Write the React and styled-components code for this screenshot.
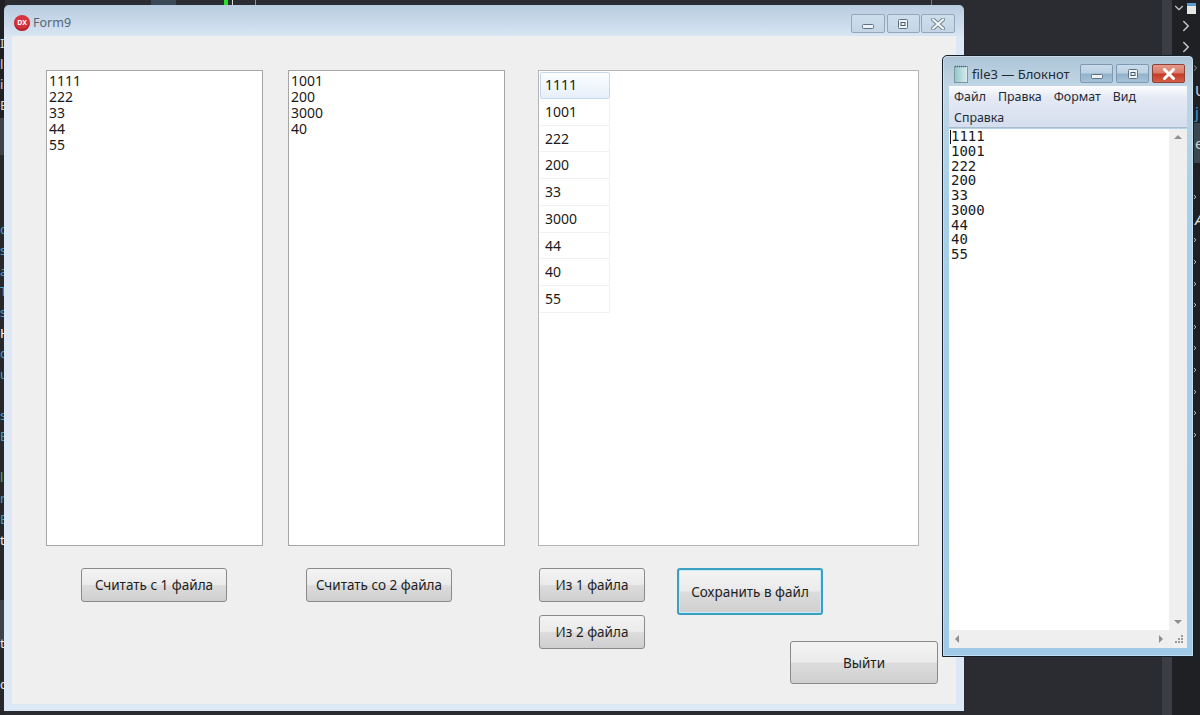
import styled, { createGlobalStyle } from "styled-components"
import { ChevronDown, ChevronRight } from "lucide-react"

const leftFragments = [
    ["I", "#d8d8d8"], ["l", "#d8d8d8"], ["i", "#d8d8d8"], ["E", "#d8d8d8"], ["", ""], ["", ""], ["", ""], ["", ""], ["", ""],
    ["c", "#3f9fc9"], ["s", "#3f9fc9"], ["a", "#3f9fc9"], ["T", "#3f9fc9"], ["s", "#3f9fc9"], ["H", "#ffffff"], ["c", "#3f9fc9"],
    ["u", "#3f9fc9"], ["", ""], ["s", "#3f9fc9"], ["E", "#3f9fc9"], ["", ""], ["l", "#4fb070"], ["n", "#3f9fc9"], ["E", "#3f9fc9"],
    ["t", "#e8e8e8"], ["", ""], ["", ""], ["", ""], ["", ""], ["t", "#e8e8e8"], ["", ""], ["c", "#e8e8e8"],
]

const rightRows = [242, 263, 285, 307, 328, 350, 372, 393, 415, 436]

const list1 = ["1111", "222", "33", "44", "55"]
const list2 = ["1001", "200", "3000", "40"]
const merged = ["1111", "1001", "222", "200", "33", "3000", "44", "40", "55"]

function WindowGlyph({ kind }) {
    if (kind === "min") {
        return (
            <svg width="14" height="12" viewBox="0 0 14 12">
                <rect x="1.5" y="6.5" width="11" height="4" rx="1" fill="#eef3f7" stroke="#5f7182" />
            </svg>
        )
    }
    if (kind === "max") {
        return (
            <svg width="14" height="12" viewBox="0 0 14 12">
                <rect x="2.5" y="1.5" width="9" height="9" rx="1" fill="#eef3f7" stroke="#5f7182" />
                <rect x="5" y="4.5" width="4" height="3" fill="none" stroke="#4a5a68" />
            </svg>
        )
    }
    return (
        <svg width="14" height="12" viewBox="0 0 14 12">
            <path d="M2 1.5 L12 10.5 M12 1.5 L2 10.5" stroke="#6f8090" strokeWidth="4" strokeLinecap="round" />
            <path d="M2 1.5 L12 10.5 M12 1.5 L2 10.5" stroke="#f4f7fa" strokeWidth="2.2" strokeLinecap="round" />
        </svg>
    )
}

function NotepadIcon() {
    return (
        <svg width="14" height="18" viewBox="0 0 14 18">
            <defs>
                <linearGradient id="padFill" x1="0" y1="0" x2="1" y2="0">
                    <stop offset="0" stopColor="#8fc8cc" />
                    <stop offset="1" stopColor="#dcecee" />
                </linearGradient>
            </defs>
            <rect x="0.5" y="1.5" width="13" height="16" fill="url(#padFill)" stroke="#7f98a0" />
            <path d="M1 1.5 H13" stroke="#56666e" strokeWidth="1.4" strokeDasharray="1 1" />
        </svg>
    )
}

function App() {
    return (
        <Desktop>
            <GlobalStyle />
            <LeftRail>
                {leftFragments.map(([letter, color], i) => (
                    <RailText key={i} $color={color}>{letter}</RailText>
                ))}
            </LeftRail>
            <Editor>
                <TopMarks>
                    <Mark $w={25} $ml={146} $color="#3b4855" />
                    <Mark $w={4} $ml={48} $color="#28e028" />
                    <Mark $w={1} $ml={4} $color="#d8d8d8" />
                    <Mark $w={1} $ml={22} $color="#c070c0" />
                    <Mark $w={1} $ml={675} $color="#77797d" />
                </TopMarks>
            </Editor>
            <Stripe />
            <RightPanel>
                <TreeHead>
                    <ChevronDown size={14} color="#c8c8c8" />
                    <FileMark />
                </TreeHead>
                <TreeArrow $ml={5} $h={21}><ChevronRight size={18} color="#c8c8c8" /></TreeArrow>
                <TreeArrow $ml={5} $h={21}><ChevronRight size={18} color="#c8c8c8" /></TreeArrow>
                <TreeArrow $ml={19} $h={22}><ChevronRight size={12} color="#c8c8c8" /></TreeArrow>
                <PanelLetter $color="#d0d0d0">U</PanelLetter>
                <PanelLetter $color="#3f9fc9">j</PanelLetter>
                <PanelBlock>e</PanelBlock>
                <Spacer />
                <TreeArrow $ml={17} $h={21.6}><ChevronRight size={16} color="#d8d8d8" /></TreeArrow>
                <PanelLetter $color="#e0e0e0" $italic>A</PanelLetter>
                {rightRows.map((y) => (
                    <TreeArrow key={y} $ml={17} $h={21.6}><ChevronRight size={16} color="#d8d8d8" /></TreeArrow>
                ))}
            </RightPanel>

            <FormWindow>
                <FormTitleBar>
                    <AppBadge>DX</AppBadge>
                    <FormTitle>Form9</FormTitle>
                    <WindowButtons>
                        <CaptionButton $w={34}><WindowGlyph kind="min" /></CaptionButton>
                        <CaptionButton $w={33}><WindowGlyph kind="max" /></CaptionButton>
                        <CaptionButton $w={34}><WindowGlyph kind="close" /></CaptionButton>
                    </WindowButtons>
                </FormTitleBar>
                <Client>
                    <Column $w={217}>
                        <ListBox>
                            {list1.map((n) => <div key={n}>{n}</div>)}
                        </ListBox>
                        <ReadButton $ml={35}>Считать с 1 файла</ReadButton>
                    </Column>
                    <Column $w={217}>
                        <ListBox>
                            {list2.map((n) => <div key={n}>{n}</div>)}
                        </ListBox>
                        <ReadButton $ml={18}>Считать со 2 файла</ReadButton>
                    </Column>
                    <Column $w={400}>
                        <GridBox>
                            {merged.map((n, i) => (
                                <GridCell key={i} $active={i === 0}>{n}</GridCell>
                            ))}
                        </GridBox>
                        <Actions>
                            <SourceStack>
                                <SourceButton>Из 1 файла</SourceButton>
                                <SourceButton>Из 2 файла</SourceButton>
                            </SourceStack>
                            <SaveColumn>
                                <SaveButton>Сохранить в файл</SaveButton>
                                <ExitButton>Выйти</ExitButton>
                            </SaveColumn>
                        </Actions>
                    </Column>
                </Client>
            </FormWindow>

            <NotepadWindow>
                <NotepadTitleBar>
                    <NotepadIcon />
                    <NotepadTitle>file3 — Блокнот</NotepadTitle>
                    <NotepadButtons>
                        <AeroButton $w={33}><WindowGlyph kind="min" /></AeroButton>
                        <AeroButton $w={33}><WindowGlyph kind="max" /></AeroButton>
                        <CloseButton>
                            <svg width="14" height="12" viewBox="0 0 14 12">
                                <path d="M2.5 1.5 L11.5 10.5 M11.5 1.5 L2.5 10.5" stroke="#fff" strokeWidth="3" strokeLinecap="round" />
                            </svg>
                        </CloseButton>
                    </NotepadButtons>
                </NotepadTitleBar>
                <MenuBar>
                    <MenuItem>Файл</MenuItem>
                    <MenuItem>Правка</MenuItem>
                    <MenuItem>Формат</MenuItem>
                    <MenuItem>Вид</MenuItem>
                    <MenuItem>Справка</MenuItem>
                </MenuBar>
                <EditArea>
                    <TextPane>
                        <Caret />
                        {merged.map((n, i) => <div key={i}>{n}</div>)}
                    </TextPane>
                    <VScroll>
                        <ArrowUp />
                        <ArrowDown />
                    </VScroll>
                </EditArea>
                <HScroll>
                    <HTrack>
                        <ArrowLeft />
                        <ArrowRight />
                    </HTrack>
                    <Grip>
                        <svg width="12" height="12" viewBox="0 0 12 12" fill="#9a9a9a">
                            <rect x="8" y="1" width="2" height="2" />
                            <rect x="5" y="4" width="2" height="2" />
                            <rect x="8" y="4" width="2" height="2" />
                            <rect x="2" y="7" width="2" height="2" />
                            <rect x="5" y="7" width="2" height="2" />
                            <rect x="8" y="7" width="2" height="2" />
                        </svg>
                    </Grip>
                </HScroll>
            </NotepadWindow>
        </Desktop>
    )
}

const GlobalStyle = createGlobalStyle`
    html, body {
        margin: 0;
        padding: 0;
        background: #2a2c31;
    }
    * {
        box-sizing: border-box;
    }
`;

const uiFont = `"Noto Sans", "Open Sans", sans-serif`;

const Desktop = styled.div`
    position: relative;
    display: flex;
    width: 1200px;
    height: 715px;
    overflow: hidden;
    background: #2a2c31;
    font-family: ${uiFont};
`;

const LeftRail = styled.div`
    width: 5px;
    padding-top: 33px;
    display: flex;
    flex-direction: column;
    overflow: hidden;
    background: linear-gradient(#1f2024 0, #1f2024 118px, #3d4248 118px, #3d4248 155px, #26282c 155px, #26282c 600px, #3d4248 600px, #3d4248 640px, #26282c 640px);
`;

const RailText = styled.div`
    height: 20.7px;
    line-height: 20px;
    font-size: 13px;
    color: ${(p) => p.$color || "transparent"};
`;

const Editor = styled.div`
    flex: 1;
    min-width: 0;
`;

const TopMarks = styled.div`
    display: flex;
    height: 5px;
`;

const Mark = styled.div`
    width: ${(p) => p.$w}px;
    margin-left: ${(p) => p.$ml}px;
    background: ${(p) => p.$color};
    flex: none;
`;

const Stripe = styled.div`
    width: 10px;
    background: #3a3d44;
`;

const RightPanel = styled.div`
    width: 28px;
    display: flex;
    flex-direction: column;
    background: #1f2024;
    padding-top: 1px;
    overflow: hidden;
`;

const TreeHead = styled.div`
    display: flex;
    align-items: center;
    height: 14px;
    gap: 1px;
`;

const FileMark = styled.div`
    width: 9px;
    height: 11px;
    background: #e6e6e6;
    border-top: 3px solid #5a9ad0;
`;

const TreeArrow = styled.div`
    display: flex;
    align-items: center;
    flex: none;
    height: ${(p) => p.$h}px;
    margin-left: ${(p) => p.$ml}px;
`;

const PanelLetter = styled.div`
    height: 22px;
    flex: none;
    padding-left: 23px;
    font-size: 15px;
    font-style: ${(p) => (p.$italic ? "italic" : "normal")};
    line-height: 22px;
    color: ${(p) => p.$color};
`;

const PanelBlock = styled.div`
    height: 40px;
    flex: none;
    padding-left: 23px;
    font-size: 15px;
    line-height: 40px;
    color: #d0d0d0;
    background: #3a4650;
`;

const Spacer = styled.div`
    height: 23px;
    flex: none;
`;

const FormWindow = styled.div`
    position: absolute;
    left: 4px;
    top: 5px;
    width: 960px;
    height: 706px;
    padding: 0 8px 7px;
    display: flex;
    flex-direction: column;
    border-radius: 5px 5px 0 0;
    background: linear-gradient(#b8cce0 0, #d8e5f3 31px, #dce8f5 32px);
`;

const FormTitleBar = styled.div`
    height: 31px;
    flex: none;
    display: flex;
    align-items: center;
    padding-top: 4px;
    margin-left: 2px;
`;

const AppBadge = styled.div`
    width: 16px;
    height: 16px;
    border-radius: 50%;
    background: #d8333f;
    box-shadow: inset 0 -2px 2px rgba(120, 0, 10, 0.4);
    color: #fff;
    font-size: 7px;
    font-weight: 700;
    line-height: 16px;
    text-align: center;
`;

const FormTitle = styled.div`
    margin-left: 3px;
    font-size: 12.5px;
    color: #566674;
`;

const WindowButtons = styled.div`
    margin-left: auto;
    margin-top: 2px;
    margin-right: 1px;
    display: flex;
    gap: 1.5px;
`;

const CaptionButton = styled.div`
    width: ${(p) => p.$w}px;
    height: 19px;
    display: flex;
    align-items: center;
    justify-content: center;
    border: 1px solid #93a7ba;
    border-radius: 2px;
    background: linear-gradient(#cfdeec, #c3d5e6);
`;

const Client = styled.div`
    flex: 1;
    display: flex;
    padding: 34px 0 0 34px;
    background: #efefef;
    color: #1a1a1a;
`;

const Column = styled.div`
    width: ${(p) => p.$w}px;
    flex: none;
    margin-right: 25px;
    &:nth-child(2) {
        margin-right: 33px;
    }
`;

const ListBox = styled.div`
    width: 217px;
    height: 476px;
    padding: 2px 2px;
    background: #fff;
    border: 1px solid #a5a5a5;
    font-size: 14px;
    line-height: 16px;
`;

const GridBox = styled.div`
    width: 381px;
    height: 476px;
    padding: 1px;
    background: #fff;
    border: 1px solid #b5b5b5;
    font-size: 14px;
`;

const GridCell = styled.div`
    width: 70px;
    height: 26.75px;
    padding-left: 5px;
    line-height: 26px;
    border-bottom: 1px solid #f0f0f0;
    border-right: 1px solid #f0f0f0;
    ${(p) => p.$active && `
        border: 1px solid #c5d9ea;
        border-radius: 2px;
        padding-left: 4px;
        line-height: 24px;
        background: linear-gradient(#fbfdff, #e6f0fa);
    `}
`;

const PushButton = styled.div`
    display: flex;
    align-items: center;
    justify-content: center;
    flex: none;
    border: 1px solid #8a8a8a;
    border-radius: 3px;
    background: linear-gradient(#f3f3f3 0, #ebebeb 48%, #dcdcdc 52%, #cfcfcf 100%);
    font-size: 13.5px;
    color: #1e1e1e;
    white-space: nowrap;
`;

const ReadButton = styled(PushButton)`
    width: 146px;
    height: 34px;
    margin-top: 22px;
    margin-left: ${(p) => p.$ml}px;
`;

const Actions = styled.div`
    display: flex;
    margin-top: 22px;
    margin-left: 1px;
`;

const SourceStack = styled.div`
    display: flex;
    flex-direction: column;
    gap: 13px;
    width: 106px;
    margin-right: 32px;
`;

const SourceButton = styled(PushButton)`
    height: 34px;
`;

const SaveColumn = styled.div`
    width: 261px;
    display: flex;
    flex-direction: column;
`;

const SaveButton = styled(PushButton)`
    width: 146px;
    height: 47px;
    border: 2px solid #3b9fc0;
    box-shadow: inset 0 0 0 1px #c4ebf7;
`;

const ExitButton = styled(PushButton)`
    width: 148px;
    height: 43px;
    margin-top: 26px;
    align-self: flex-end;
`;

const NotepadWindow = styled.div`
    position: absolute;
    left: 942px;
    top: 55px;
    width: 252px;
    height: 602px;
    padding: 0 6px 8px;
    display: flex;
    flex-direction: column;
    border: 1px solid #15202a;
    border-radius: 5px 5px 0 0;
    background: linear-gradient(#aec5d8 0, #c0d6e6 30px, #a6d0ea 140px, #9fcbe8 100%);
    box-shadow: inset 0 0 0 1px rgba(255, 255, 255, 0.35);
`;

const NotepadTitleBar = styled.div`
    height: 30px;
    flex: none;
    display: flex;
    align-items: center;
    padding-top: 5px;
    margin-left: 5px;
`;

const NotepadTitle = styled.div`
    margin-left: 4px;
    font-size: 13px;
    color: #1f2a33;
`;

const NotepadButtons = styled.div`
    margin-left: auto;
    margin-right: 2px;
    display: flex;
    gap: 3px;
`;

const AeroButton = styled.div`
    width: ${(p) => p.$w}px;
    height: 19px;
    display: flex;
    align-items: center;
    justify-content: center;
    border: 1px solid #7e99b0;
    border-radius: 2px;
    background: linear-gradient(#cadceb 0, #bcd0e2 48%, #92b1ca 52%, #a7c2d8 100%);
`;

const CloseButton = styled(AeroButton)`
    width: 33px;
    border-color: #8d4436;
    background: linear-gradient(#e59a8b 0, #d87a68 48%, #c23c27 52%, #d45f48 100%);
`;

const MenuBar = styled.div`
    height: 42px;
    flex: none;
    display: flex;
    flex-wrap: wrap;
    align-content: flex-start;
    padding: 0 0 0 5px;
    column-gap: 12px;
    background: linear-gradient(#fbfcfe 0, #e4e9f4 30%, #d5deee 100%);
    border-bottom: 1px solid #a7bccd;
`;

const MenuItem = styled.div`
    height: 21px;
    font-size: 12.4px;
    line-height: 21px;
    color: #1e2a36;
    &:last-child {
        flex-basis: 100%;
    }
`;

const EditArea = styled.div`
    flex: 1;
    min-height: 0;
    display: flex;
    margin-top: 1px;
    background: #fff;
`;

const TextPane = styled.div`
    position: relative;
    flex: 1;
    padding: 0 0 0 2px;
    font-family: "DejaVu Sans Mono", monospace;
    font-size: 14px;
    line-height: 14.75px;
    color: #1a1a1a;
`;

const Caret = styled.div`
    position: absolute;
    left: 1px;
    top: 1px;
    width: 1px;
    height: 14px;
    background: #111;
`;

const VScroll = styled.div`
    width: 18px;
    flex: none;
    display: flex;
    flex-direction: column;
    justify-content: space-between;
    align-items: center;
    padding: 6px 0;
    background: #efefef;
`;

const ArrowUp = styled.div`
    border: 4px solid transparent;
    border-top: 0;
    border-bottom: 4px solid #8f8f8f;
`;

const ArrowDown = styled.div`
    border: 4px solid transparent;
    border-bottom: 0;
    border-top: 4px solid #8f8f8f;
`;

const HScroll = styled.div`
    height: 18px;
    flex: none;
    display: flex;
    background: #efefef;
`;

const HTrack = styled.div`
    flex: 1;
    display: flex;
    justify-content: space-between;
    align-items: center;
    padding: 0 6px;
`;

const ArrowLeft = styled.div`
    border: 4px solid transparent;
    border-left: 0;
    border-right: 4px solid #8f8f8f;
`;

const ArrowRight = styled.div`
    border: 4px solid transparent;
    border-right: 0;
    border-left: 4px solid #8f8f8f;
`;

const Grip = styled.div`
    width: 18px;
    display: flex;
    align-items: flex-end;
    justify-content: flex-end;
    padding: 0 2px 2px 0;
`;

export default App
